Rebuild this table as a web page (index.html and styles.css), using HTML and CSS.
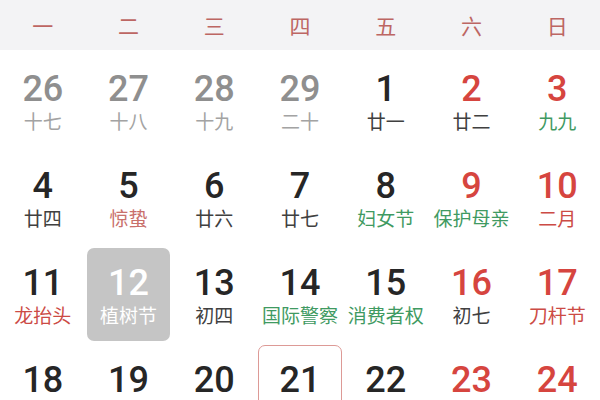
FILE: index.html
```html
<!DOCTYPE html>
<html lang="zh">
<head>
<meta charset="utf-8">
<link rel="stylesheet" href="styles.css">
</head>
<body>
<div class="cal">
  <div class="week">
    <span>一</span><span>二</span><span>三</span><span>四</span><span>五</span><span>六</span><span>日</span>
  </div>
  <div class="days">
    <div class="day other"><span class="num">26</span><span class="lunar">十七</span></div>
    <div class="day other"><span class="num">27</span><span class="lunar">十八</span></div>
    <div class="day other"><span class="num">28</span><span class="lunar">十九</span></div>
    <div class="day other"><span class="num">29</span><span class="lunar">二十</span></div>
    <div class="day"><span class="num">1</span><span class="lunar">廿一</span></div>
    <div class="day weekend"><span class="num">2</span><span class="lunar">廿二</span></div>
    <div class="day weekend"><span class="num">3</span><span class="lunar green">九九</span></div>

    <div class="day"><span class="num">4</span><span class="lunar">廿四</span></div>
    <div class="day"><span class="num">5</span><span class="lunar term">惊蛰</span></div>
    <div class="day"><span class="num">6</span><span class="lunar">廿六</span></div>
    <div class="day"><span class="num">7</span><span class="lunar">廿七</span></div>
    <div class="day"><span class="num">8</span><span class="lunar green">妇女节</span></div>
    <div class="day weekend"><span class="num">9</span><span class="lunar green">保护母亲</span></div>
    <div class="day weekend"><span class="num">10</span><span class="lunar red">二月</span></div>

    <div class="day"><span class="num">11</span><span class="lunar red">龙抬头</span></div>
    <div class="day selected"><span class="num">12</span><span class="lunar">植树节</span></div>
    <div class="day"><span class="num">13</span><span class="lunar">初四</span></div>
    <div class="day"><span class="num">14</span><span class="lunar green">国际警察</span></div>
    <div class="day"><span class="num">15</span><span class="lunar green">消费者权</span></div>
    <div class="day weekend"><span class="num">16</span><span class="lunar">初七</span></div>
    <div class="day weekend"><span class="num">17</span><span class="lunar red">刀杆节</span></div>

    <div class="day"><span class="num">18</span></div>
    <div class="day"><span class="num">19</span></div>
    <div class="day"><span class="num">20</span></div>
    <div class="day today"><span class="num">21</span></div>
    <div class="day"><span class="num">22</span></div>
    <div class="day weekend"><span class="num">23</span></div>
    <div class="day weekend"><span class="num">24</span></div>
  </div>
</div>
</body>
</html>
```

FILE: styles.css
```css
html, body {
  margin: 0;
  padding: 0;
  background: #ffffff;
}
body {
  width: 600px;
  height: 400px;
  overflow: hidden;
  font-family: Roboto, "Noto Sans CJK SC", sans-serif;
}
.week {
  display: grid;
  grid-template-columns: repeat(7, 1fr);
  height: 50px;
  margin-bottom: 2px;
  align-items: center;
  background: #f3f3f5;
  color: #bd6663;
  font-family: "Noto Sans CJK SC", sans-serif;
  font-size: 21px;
  text-align: center;
}
.days {
  display: grid;
  grid-template-columns: repeat(7, 1fr);
  grid-auto-rows: 97px;
}
.day {
  margin: 2px 1px;
  border-radius: 7px;
  display: flex;
  flex-direction: column;
  align-items: center;
  justify-content: flex-start;
  padding-top: 15px;
  color: #262626;
  border: 1px solid transparent;
}
.num {
  font-family: Roboto, sans-serif;
  font-size: 36px;
  line-height: 38px;
  font-weight: 500;
}
.lunar {
  margin-top: 2px;
  font-family: "Noto Sans CJK SC", sans-serif;
  font-size: 19px;
  line-height: 22px;
  color: #404040;
  white-space: nowrap;
}
.other .num { color: #8f8f8f; }
.other .lunar { color: #a3a3a3; }
.weekend .num { color: #d6453f; }
.lunar.green { color: #3f9a62; }
.lunar.red { color: #cc4b45; }
.lunar.term { color: #c9706c; }
.selected {
  background: #c5c5c5;
}
.selected .num,
.selected .lunar { color: #ffffff; }
.today {
  border-color: #dd9a96;
}
```
